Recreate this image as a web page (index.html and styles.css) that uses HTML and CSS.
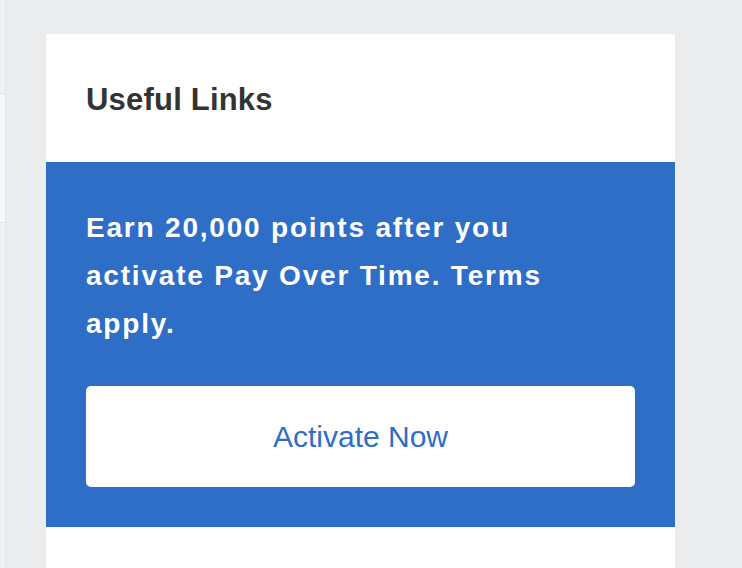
FILE: index.html
```html
<!DOCTYPE html>
<html lang="en">
<head>
<meta charset="utf-8">
<title>Useful Links</title>
<link rel="stylesheet" href="styles.css">
</head>
<body>
<div class="page">
  <aside class="side">
    <div class="side-box"></div>
  </aside>
  <main class="main">
    <section class="card">
      <header class="card-head">
        <h2 class="card-title">Useful Links</h2>
      </header>
      <div class="promo">
        <p class="promo-text">Earn 20,000 points after you activate Pay Over Time. Terms apply.</p>
        <a class="promo-btn" href="#">Activate Now</a>
      </div>
      <div class="card-rest"></div>
    </section>
  </main>
</div>
</body>
</html>
```

FILE: styles.css
```css
html, body {
  margin: 0;
  padding: 0;
  height: 100%;
}
body {
  background: #ebecee;
  font-family: "Liberation Sans", Arial, sans-serif;
  overflow: hidden;
}
.page {
  display: flex;
  height: 568px;
}
.side {
  width: 6px;
  background: #f1f2f3;
  border-right: 1px solid #e6e7e9;
  padding-top: 93px;
  box-sizing: border-box;
}
.side-box {
  height: 128px;
  background: #f6f7f8;
  border-top: 1px solid #dfe0e2;
  border-bottom: 1px solid #dfe0e2;
}
.main {
  padding: 34px 0 0 40px;
}
.card {
  width: 629px;
  background: #ffffff;
  height: 534px;
  display: flex;
  flex-direction: column;
}
.card-head {
  height: 128px;
  box-sizing: border-box;
  padding: 48px 40px 0;
}
.card-title {
  margin: 0;
  font-size: 31px;
  letter-spacing: 0.2px;
  line-height: 36px;
  font-weight: 700;
  color: #333333;
}
.promo {
  background: #2e6ec7;
  padding: 42px 40px 40px;
  display: flex;
  flex-direction: column;
}
.promo-text {
  margin: 0;
  color: #ffffff;
  font-size: 28px;
  letter-spacing: 1.8px;
  line-height: 48px;
  font-weight: 700;
}
.promo-btn {
  margin-top: 38px;
  height: 101px;
  background: #ffffff;
  border-radius: 5px;
  display: flex;
  align-items: center;
  justify-content: center;
  color: #2e6ec7;
  font-size: 30px;
  text-decoration: none;
}
.card-rest {
  flex: 1;
}
```
